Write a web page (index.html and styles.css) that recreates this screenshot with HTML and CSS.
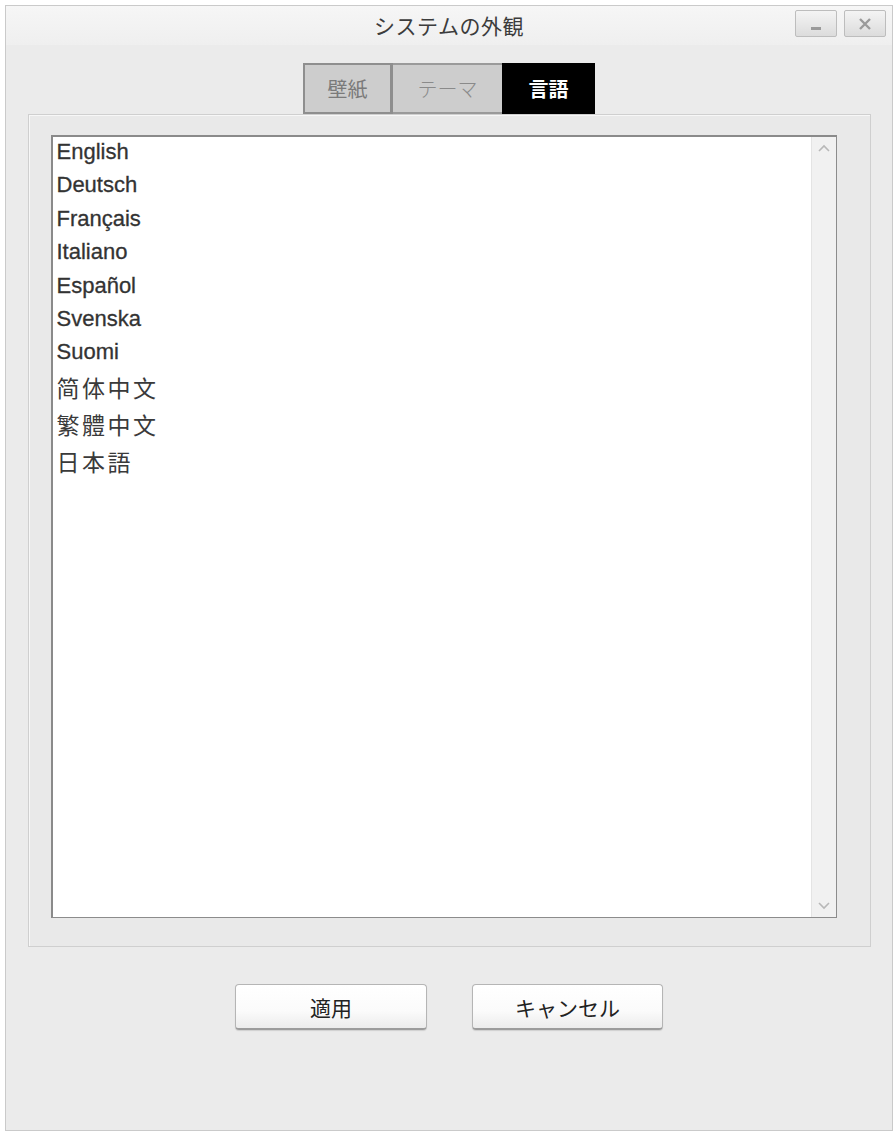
FILE: index.html
```html
<!DOCTYPE html>
<html lang="ja">
<head>
<meta charset="utf-8">
<title>システムの外観</title>
<link rel="stylesheet" href="styles.css">
</head>
<body>
<div class="window">
  <div class="titlebar">
    <div class="spacer"></div>
    <div class="title">システムの外観</div>
    <div class="controls">
      <div class="ctrl"><svg width="14" height="6" viewBox="0 0 14 6"><rect x="2" y="2" width="10" height="3" fill="#9a9a9a"/></svg></div>
      <div class="ctrl"><svg width="16" height="16" viewBox="0 0 16 16"><path d="M3 3 L13 13 M13 3 L3 13" stroke="#9a9a9a" stroke-width="2.4" fill="none"/></svg></div>
    </div>
  </div>
  <div class="tabs">
    <div class="tab tab-wall">壁紙</div>
    <div class="tab tab-theme">テーマ</div>
    <div class="tab tab-active">言語</div>
  </div>
  <div class="panel">
    <div class="listbox">
      <ul class="items">
        <li class="item">English</li>
        <li class="item">Deutsch</li>
        <li class="item">Français</li>
        <li class="item">Italiano</li>
        <li class="item">Español</li>
        <li class="item">Svenska</li>
        <li class="item">Suomi</li>
        <li class="item cjk" lang="zh-CN">简体中文</li>
        <li class="item cjk" lang="zh-TW">繁體中文</li>
        <li class="item cjk" lang="ja">日本語</li>
      </ul>
      <div class="scrollbar">
        <svg class="arrow" width="14" height="10" viewBox="0 0 14 10"><path d="M2 8 L7 3 L12 8" stroke="#b8b8b8" stroke-width="1.6" fill="none"/></svg>
        <svg class="arrow" width="14" height="10" viewBox="0 0 14 10"><path d="M2 2 L7 7 L12 2" stroke="#b8b8b8" stroke-width="1.6" fill="none"/></svg>
      </div>
    </div>
  </div>
  <div class="buttons">
    <button class="btn btn-apply">適用</button>
    <button class="btn btn-cancel">キャンセル</button>
  </div>
</div>
</body>
</html>
```
FILE: styles.css
```css
html, body {
  margin: 0;
  padding: 0;
  background: #ffffff;
}
body {
  font-family: "Liberation Sans", "Noto Sans CJK JP", sans-serif;
}
.window {
  margin: 5px 0 0 5px;
  width: 888px;
  height: 1126px;
  box-sizing: border-box;
  border: 1px solid #cacaca;
  background: #ebebeb;
  display: flex;
  flex-direction: column;
  align-items: center;
}
.titlebar {
  align-self: stretch;
  height: 39px;
  display: grid;
  grid-template-columns: 1fr auto 1fr;
  align-items: start;
  background: linear-gradient(#f6f6f6, #efefef);
}
.title {
  font-family: "Noto Sans CJK JP", sans-serif;
  font-weight: 400;
  font-size: 21px;
  line-height: 22px;
  margin-top: 8px;
  color: #3c3c3c;
  letter-spacing: 0.5px;
}
.controls {
  justify-self: end;
  display: flex;
  gap: 7px;
  margin: 4px 6px 0 0;
}
.ctrl {
  width: 42px;
  height: 27px;
  box-sizing: border-box;
  border: 1px solid #bdbdbd;
  border-radius: 2px;
  background: linear-gradient(#f4f4f4, #dcdcdc);
  display: flex;
  align-items: center;
  justify-content: center;
}
.ctrl:first-child svg {
  margin-top: 8px;
}
.tabs {
  display: flex;
  margin-top: 18px;
  height: 51px;
}
.tab {
  box-sizing: border-box;
  height: 51px;
  display: flex;
  align-items: center;
  justify-content: center;
  font-family: "Noto Sans CJK JP", sans-serif;
  font-size: 20px;
}
.tab-wall {
  width: 90px;
  background: #cdcdcd;
  border: 2px solid #8e8e8e;
  border-right-width: 3px;
  color: #7a7a7a;
}
.tab-theme {
  width: 109px;
  background: #cdcdcd;
  border: 2px solid #9a9a9a;
  border-left: none;
  border-right: none;
  color: #8a8a8a;
  font-weight: 300;
}
.tab-active {
  width: 93px;
  background: #000000;
  color: #ffffff;
  font-weight: 700;
}
.panel {
  width: 843px;
  height: 833px;
  box-sizing: border-box;
  border: 1px solid #cfcfcf;
  box-shadow: inset 1px 1px 0 #f7f7f7;
  background: #e9e9e9;
  padding: 20px 33px 28px 22px;
}
.listbox {
  height: 100%;
  box-sizing: border-box;
  border: 1px solid #8c8c8c;
  border-top: 2px solid #8a8a8a;
  border-left: 2px solid #8a8a8a;
  background: #ffffff;
  display: flex;
}
.items {
  list-style: none;
  margin: -2px 0 0 0;
  padding: 0 0 0 4px;
  flex: 1;
}
.item {
  font-family: "Liberation Sans", sans-serif;
  font-size: 22px;
  line-height: 33.4px;
  color: #333333;
  -webkit-text-stroke: 0.3px #333333;
}
.item.cjk {
  font-family: "Noto Sans CJK SC", "Noto Sans CJK TC", "Noto Sans CJK JP", sans-serif;
  font-size: 23px;
  line-height: 37px;
  letter-spacing: 2.5px;
  -webkit-text-stroke: 0;
  color: #3a3a3a;
}
.scrollbar {
  width: 24px;
  background: #f1f1f1;
  border-left: 1px solid #e4e4e4;
  display: flex;
  flex-direction: column;
  justify-content: space-between;
  align-items: center;
  padding: 6px 0 6px;
}
.buttons {
  display: flex;
  gap: 45px;
  margin-top: 37px;
}
.btn {
  height: 46px;
  box-sizing: border-box;
  border: 1px solid #b5b5b5;
  border-bottom: 2px solid #9c9c9c;
  border-radius: 4px;
  background: linear-gradient(#ffffff 0%, #fbfbfb 60%, #ececec 100%);
  font-family: "Noto Sans CJK JP", sans-serif;
  font-size: 21px;
  color: #222222;
  padding: 0;
  box-shadow: 0 1px 1px rgba(0,0,0,0.12);
}
.btn-apply {
  width: 192px;
}
.btn-cancel {
  width: 191px;
}
```
